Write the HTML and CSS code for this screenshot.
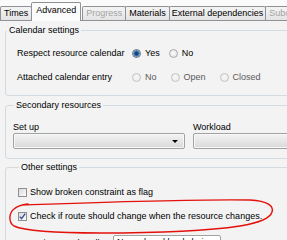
FILE: index.html
```html
<!DOCTYPE html>
<html>
<head>
<meta charset="utf-8">
<link rel="stylesheet" href="styles.css">
</head>
<body>
<div class="screen">
  <div class="tabstrip">
    <div class="tab">Times</div>
    <div class="tab active">Advanced</div>
    <div class="tab disabled">Progress</div>
    <div class="tab">Materials</div>
    <div class="tab ext">External dependencies</div>
    <div class="tab disabled">Subcontracting</div>
  </div>
  <div class="page">
    <fieldset class="group cal">
      <legend>Calendar settings</legend>
      <div class="row">
        <span class="rlabel">Respect resource calendar</span>
        <span class="opts tight">
          <span class="opt"><i class="radio on"></i>Yes</span>
          <span class="opt"><i class="radio"></i>No</span>
        </span>
      </div>
      <div class="row">
        <span class="rlabel">Attached calendar entry</span>
        <span class="opts wide dis">
          <span class="opt"><i class="radio"></i>No</span>
          <span class="opt"><i class="radio"></i>Open</span>
          <span class="opt"><i class="radio"></i>Closed</span>
        </span>
      </div>
    </fieldset>
    <fieldset class="group sec">
      <legend>Secondary resources</legend>
      <div class="fields">
        <div class="field setup">
          <span class="flabel">Set up</span>
          <div class="combo"><b class="arrow"></b></div>
        </div>
        <div class="field work">
          <span class="flabel">Workload</span>
          <div class="combo"></div>
        </div>
      </div>
    </fieldset>
    <fieldset class="group other">
      <legend>Other settings</legend>
      <div class="check"><i class="box"></i>Show broken constraint as flag</div>
      <div class="check"><i class="box on"><svg viewBox="0 0 9 9" width="9" height="9"><path d="M1.8 4.6 L3.6 6.6 L7.2 1.6" fill="none" stroke="#3d4f96" stroke-width="1.4"/></svg></i>Check if route should change when the resource changes.</div>
      <div class="handler">
        <span class="hlabel">Operation step handler</span>
        <div class="combo white"><span>Normal workload chain</span><b class="arrow"></b></div>
      </div>
    </fieldset>
  </div>
  <svg class="ink" width="287" height="240" viewBox="0 0 287 240">
    <path d="M22 205 C80 203 190 199 250 200 C268 201 274 206 272 212 C270 219 258 223 240 226 C200 232 150 233 100 233 C60 233 25 231 14 226 C8 222 9 213 14 209 C17 206 20 205 28 204" fill="none" stroke="#e3120b" stroke-width="1.4" stroke-linecap="round"/>
  </svg>
</div>
</body>
</html>
```
FILE: styles.css
```css
html, body {
  margin: 0;
  width: 287px;
  height: 240px;
  overflow: hidden;
  background: #f0f0f0;
  font-family: "Liberation Sans", Arial, sans-serif;
  font-size: 9px;
  color: #000;
}

.screen {
  position: relative;
  width: 320px;
  height: 240px;
  overflow: hidden;
}

.tabstrip {
  display: flex;
  align-items: flex-end;
  height: 20px;
  background: #fbfbfb;
  white-space: nowrap;
}

.tab {
  height: 13px;
  line-height: 13px;
  padding: 0 3px;
  border: 1px solid #8e9196;
  border-bottom: none;
  margin-right: -1px;
  background: linear-gradient(#f4f4f4, #e4e4e4);
  border-radius: 2px 2px 0 0;
}

.tab.ext {
  padding: 0 2px;
}

.tab.active {
  height: 18px;
  line-height: 14px;
  margin: 0 1px -1px 0;
  background: #fcfcfc;
  position: relative;
  z-index: 1;
  padding: 0 4px;
}

.tab.disabled {
  color: #a3a3a3;
}

.page {
  border-top: 1px solid #8e9196;
  padding-top: 4px;
  background: #f3f3f3;
  height: 219px;
}

.group {
  margin: 0 0 0 5px;
  width: 300px;
  padding: 0;
  border: 1px solid #d3dbe1;
  border-radius: 3px;
  min-width: 0;
}

.group + .group {
  margin-top: 4px;
}

.group.other {
  margin-top: 3px;
}

legend {
  padding: 0 2px;
  margin-left: 1px;
  line-height: 10px;
}

.cal {
  padding: 6px 0 6px 0;
}

.row {
  display: flex;
  align-items: center;
  height: 24px;
  padding-left: 11px;
}

.rlabel {
  width: 115px;
}

.opts {
  display: flex;
  align-items: center;
}

.opts.tight { gap: 9px; }
.opts.wide { gap: 14px; }
.opts.dis { color: #5a5a5a; }

.opt {
  display: flex;
  align-items: center;
}

.radio {
  display: inline-block;
  width: 9px;
  height: 9px;
  box-sizing: border-box;
  border-radius: 50%;
  border: 1px solid #a9a9a9;
  background: radial-gradient(circle at 45% 45%, #fbfbfb, #dedede);
  margin-right: 4px;
}

.radio.on {
  border-color: #5c6e80;
  background: radial-gradient(circle, #17447a 0 1.8px, #4f8cc8 2.4px 3px, #e6e6e6 3.4px);
}

.dis .radio {
  border-color: #c2c2c2;
  background: radial-gradient(circle at 45% 45%, #f8f8f8, #e8e8e8);
}

.sec {
  padding: 12px 0 9px 7px;
}

.fields {
  display: flex;
  gap: 8px;
}

.field {
  display: flex;
  flex-direction: column;
}

.field.setup { width: 172px; }
.field.work { width: 120px; }

.flabel {
  line-height: 10px;
  height: 10px;
  margin-bottom: 1px;
}

.combo {
  position: relative;
  height: 16px;
  box-sizing: border-box;
  border: 1px solid #a2a2a2;
  border-radius: 2px;
  background: linear-gradient(#f3f3f3, #e6e6e6 50%, #d9d9d9);
  box-shadow: inset 0 0 0 1px #f8f8f8;
}

.arrow {
  position: absolute;
  right: 6px;
  top: 6px;
  width: 0;
  height: 0;
  border-left: 3px solid transparent;
  border-right: 3px solid transparent;
  border-top: 3px solid #000;
}

.other {
  padding: 8px 0 0 12px;
  height: 80px;
}

.check {
  display: flex;
  align-items: center;
  height: 24px;
  white-space: nowrap;
}

.box {
  display: inline-block;
  width: 9px;
  height: 9px;
  box-sizing: border-box;
  border: 1px solid #8f8f8f;
  background: linear-gradient(135deg, #dadada, #fdfdfd);
  margin-right: 3px;
  position: relative;
}

.box svg {
  position: absolute;
  left: -1px;
  top: -1px;
}

.handler {
  display: flex;
  align-items: center;
  margin-top: 7px;
  margin-left: -2px;
}

.hlabel {
  width: 97px;
  white-space: nowrap;
}

.combo.white {
  width: 108px;
  height: 15px;
  line-height: 13px;
  background: #fff;
  box-shadow: none;
  padding-left: 3px;
  white-space: nowrap;
}

.combo.white .arrow {
  top: 5px;
}

.ink {
  position: absolute;
  left: 0;
  top: 0;
  pointer-events: none;
}
```
